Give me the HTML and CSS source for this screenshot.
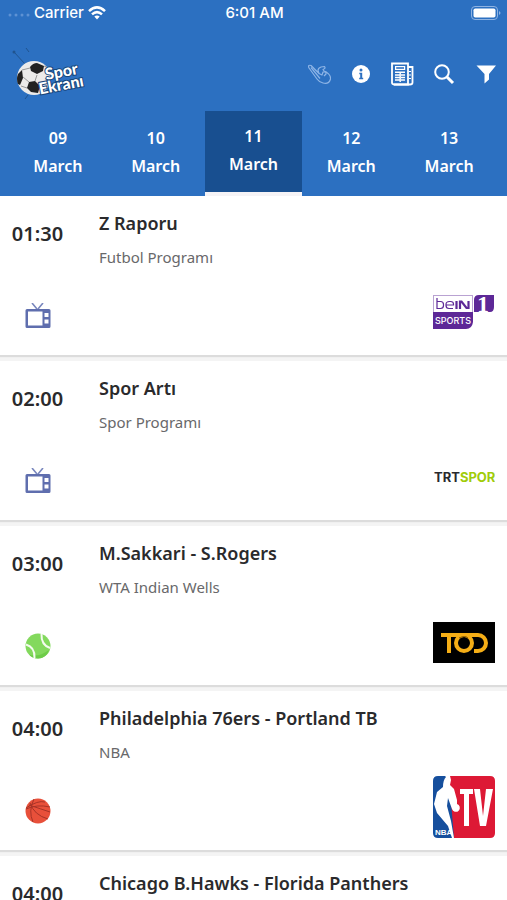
FILE: index.html
```
<!DOCTYPE html>
<html lang="en">
<head>
<meta charset="utf-8">
<meta name="viewport" content="width=device-width, initial-scale=1">
<title>Spor Ekranı</title>
<link rel="stylesheet" href="styles.css">
</head>
<body>
<svg class="defs" aria-hidden="true">
  <symbol id="tv" viewBox="0 0 26 26">
    <path d="M7 0l5 6M18 0l-5 6" fill="none" stroke="#7886bd" stroke-width="1.6"/>
    <path fill-rule="evenodd" d="M2 6h22q1.500 0 1.500 1.500v16q0 1.500-1.500 1.500h-22q-1.500 0-1.500-1.500v-16q0-1.500 1.500-1.500zM3 8.500v14h14.500v-14zM19.500 10v4h4v-4zM19.500 16.500v4h4v-4z" fill="#5f6eae"/>
  </symbol>
</svg>
<div class="screen">
  <header class="header">
    <div class="status">
      <div class="carrier">
        <svg class="dots" viewBox="0 0 22 6" aria-hidden="true"><g fill="#5e92d4"><circle cx="2" cy="5" r="1.500"/><circle cx="8" cy="5" r="1.500"/><circle cx="14" cy="5" r="1.500"/><circle cx="20" cy="5" r="1.500"/></g></svg>
        <span>Carrier</span>
        <svg class="wifi" viewBox="0 0 18 14" aria-hidden="true"><g fill="none" stroke="#fff" stroke-width="2.500"><path d="M1 5.200Q9-2.400 17 5.200"/><path d="M4 8.400Q9 3.800 14 8.400"/></g><path d="M6.300 10.600Q9 8.500 11.700 10.600L9 13.600z" fill="#fff"/></svg>
      </div>
      <time>6:01 AM</time>
      <svg class="battery" viewBox="0 0 30 14" aria-hidden="true"><rect x=".5" y=".5" width="26" height="13" rx="3.500" fill="none" stroke="#8fb3e2"/><rect x="2.500" y="2.500" width="22" height="9" rx="1.800" fill="#fff"/><path d="M28 5q3 2 0 4z" fill="#8fb3e2"/></svg>
    </div>
    <div class="bar">
      <a href="#" class="brand" aria-label="Spor Ekranı">
        <svg viewBox="0 0 76 54" aria-hidden="true">
          <path d="M2 5l11 12M14 1l3 4M16 48l-3 4" stroke="#20548f" stroke-width="1"/><circle cx="2" cy="5" r="1.500" fill="#20548f"/>
          <circle cx="22" cy="31" r="17" fill="#ecebea"/>
          <g fill="#222"><path d="M18 20q3-4 7-4l7 3-1 5-6 3-6-3z"/><path d="M6 27l4-4 1 8-3 7-2-1q-2-5 0-10z"/><path d="M17 35l6-1 5 5-2 7-7-1-4-4z"/></g>
          <path d="M11 30l6 5M25 28l-2 6M10 23l8-2M15 41l-6-2M32 19l5 2" stroke="#999" fill="none"/>
          <g class="brand-text" transform="rotate(-11 50 30)"><text x="34" y="30">Spor</text><text x="25" y="43">Ekranı</text></g>
        </svg>
      </a>
      <nav class="actions" aria-label="Tools">
        <button type="button" aria-label="Gestures"><svg viewBox="0 0 26 26"><g fill="none" stroke="#8db4e6" stroke-width="1.200" stroke-linejoin="round"><path d="M12 18L4 7Q2.500 3.500 6 4.500L14 12.500L13 9.500Q13 7 16 6L19.500 5.500Q21 7.500 18 8.500L19 10Q26 13 25.500 18Q24 23.500 18 22Q14 21 12 18z"/><path d="M14 12.500l3 1.500 1-3h3v2l-2 2M6 6.500l9 11"/></g></svg></button>
        <button type="button" aria-label="Information"><svg viewBox="0 0 26 26"><circle cx="14" cy="13" r="9" fill="#fff"/><circle cx="14" cy="9" r="1.500" fill="#2c70c1"/><path d="M12.300 11.800h2.900v5h1v1.400h-4v-1.400h1v-3.600h-.9z" fill="#2c70c1"/></svg></button>
        <button type="button" aria-label="News"><svg viewBox="0 0 26 26"><g fill="none" stroke="#fff"><path d="M3 2.500h16v21H5q-2-.2-2-2z" stroke-width="1.800"/><path d="M19 6h4.500v15.500q0 2-2.500 2H5" stroke-width="1.800"/><rect x="6.600" y="5.600" width="9" height="2.800" stroke-width="1.200"/><path d="M6 11.200h10M6 14h4.500M12 14h4M6 16.500h4.500M12 16.500h4M6 19h4.500M12 19h4M11.200 11v10" stroke-width="1.400"/><path d="M20 10.500h2M20 14h2M20 17.500h2" stroke-width="1.200"/></g></svg></button>
        <button type="button" aria-label="Search"><svg viewBox="0 0 26 26"><g fill="none" stroke="#fff"><circle cx="11" cy="11" r="6.800" stroke-width="2"/><path d="M16 16l6 6" stroke-width="3"/></g></svg></button>
        <button type="button" aria-label="Filter"><svg viewBox="0 0 26 26"><path d="M3.500 4.500h19.500l-7 8.500v5.500l-4.500 4V13z" fill="#fff"/></svg></button>
      </nav>
    </div>
    <nav class="days" aria-label="Days">
      <a href="#"><span>09</span><span>March</span></a>
      <a href="#"><span>10</span><span>March</span></a>
      <a href="#" class="active" aria-current="date"><span>11</span><span>March</span></a>
      <a href="#"><span>12</span><span>March</span></a>
      <a href="#"><span>13</span><span>March</span></a>
    </nav>
  </header>
  <main class="list">
    <article class="card">
      <time>01:30</time>
      <div class="info"><h2>Z Raporu</h2><p>Futbol Programı</p></div>
      <svg class="kind" role="img" aria-label="TV programme"><use href="#tv"/></svg>
      <svg class="channel" viewBox="0 0 62 62" role="img" aria-label="beIN Sports 1">
        <rect x=".5" y="14.500" width="39" height="17" fill="#fff" stroke="#b9a2d2"/>
        <path d="M0 31h40v10q-1 7-7 7H0z" fill="#5d2897"/><path d="M41 31V19q0-5 5-5h15v12q0 5-4 5z" fill="#5d2897"/>
        <g fill="none" stroke="#5d2897" stroke-width="1.200"><path d="M4 17v10.500h3.500q3 0 3-3v-1q0-3-3-3H4"/><path d="M13 24h7.500v-1q0-2.500-3-2.500h-1q-3.500 0-3.500 3v1q0 3 3 3h4"/></g>
        <path d="M23.500 20v8M27 28v-7.500h1.500l5 6.500H35.500V20" fill="none" stroke="#5d2897" stroke-width="2.200"/>
        <text class="sports" x="2" y="43">SPORTS</text><text class="one" x="44" y="31">1</text>
      </svg>
    </article>
    <article class="card">
      <time>02:00</time>
      <div class="info"><h2>Spor Artı</h2><p>Spor Programı</p></div>
      <svg class="kind" role="img" aria-label="TV programme"><use href="#tv"/></svg>
      <svg class="channel" viewBox="0 0 62 62" role="img" aria-label="TRT Spor">
        <text class="trt" x="1" y="36">TRT<tspan fill="#a0cc0a">SPOR</tspan></text>
      </svg>
    </article>
    <article class="card">
      <time>03:00</time>
      <div class="info"><h2>M.Sakkari - S.Rogers</h2><p>WTA Indian Wells</p></div>
      <svg class="kind" viewBox="0 0 26 26" role="img" aria-label="Tennis"><circle cx="13" cy="13" r="12.500" fill="#83d95d"/><path d="M4 21.500Q13 25 24 17Q21 25.500 13 25.500Q7 25.500 4 21.500z" fill="#6dcc48"/><g fill="none" stroke="#f4fbef" stroke-width="2"><path d="M1 11.500Q10 14 9.500 25"/><path d="M16.500 1Q16 12 25 15"/></g></svg>
      <svg class="channel" viewBox="0 0 62 62" role="img" aria-label="TOD">
        <rect x="0" y="11" width="62" height="41" fill="#000"/>
        <g fill="none" stroke="#f5ae16" stroke-width="4"><path d="M8 24h37a8 8 0 0 1 0 16h-4"/><path d="M16 24v18"/><circle cx="31" cy="32" r="8"/></g><path d="M26 27q6-3 9 0" fill="none" stroke="#8b5c00" stroke-width="1"/>
      </svg>
    </article>
    <article class="card">
      <time>04:00</time>
      <div class="info"><h2>Philadelphia 76ers - Portland TB</h2><p>NBA</p></div>
      <svg class="kind" viewBox="0 0 26 26" role="img" aria-label="Basketball"><circle cx="13" cy="13" r="12.500" fill="#e8503a"/><g fill="none" stroke="#a73327" stroke-width="1"><path d="M9 1Q3 13 8 24M1 10Q13 2 20 4M5 5Q9 17 23 21M1 11Q12 6 25 9M4 7Q16 11 25 14"/></g></svg>
      <svg class="channel" viewBox="0 0 62 62" role="img" aria-label="NBA TV">
        <path d="M5 0h18v62H5q-5 0-5-5V5q0-5 5-5z" fill="#164f9d"/><path d="M16 0h41q5 0 5 5v52q0 5-5 5H21z" fill="#dd1935"/>
        <path d="M12 0h5l1 4-1 5 4 4 3 11v4a4 4 0 1 1-5 5l-4-11-1 8 4 15 3 17h-2L15 50 4 37 1 28l3-12 6-5q0-7 3-10z" fill="#fff"/>
        <text class="nba" x="2" y="59">NBA</text>
        <path d="M27 13h13v5h-4v32h-5V18h-4zM41 13h6l3 27 3-27h7l-7 37h-6z" fill="#fff"/>
      </svg>
    </article>
    <article class="card">
      <time>04:00</time>
      <div class="info"><h2>Chicago B.Hawks - Florida Panthers</h2></div>
    </article>
  </main>
</div>
</body>
</html>
```
FILE: styles.css
```
* { box-sizing: border-box; }
body { margin: 0; background: #f4f4f4; color: #2a2a2c; font-family: "Noto Sans", "Open Sans", sans-serif; }
h2, p { margin: 0; }
.defs { position: absolute; width: 0; height: 0; }
.screen { display: flex; flex-direction: column; height: 100vh; overflow: hidden; }
.header { flex: none; background: #2c70c1; color: #fff; }
.status { display: grid; grid-template-columns: 1fr auto 1fr; align-items: center; height: 26px; padding: 0 6px 0 8px; font: 500 15px/26px Inter, sans-serif; }
.carrier { display: flex; align-items: center; gap: 4px; }
.dots { width: 22px; height: 6px; overflow: visible; }
.wifi { width: 18px; height: 14px; }
.battery { width: 30px; height: 14px; justify-self: end; }
.bar { display: flex; align-items: center; justify-content: space-between; height: 85px; padding: 11px 8px 0 12px; }
.brand svg { display: block; width: 76px; height: 54px; }
.brand-text { font: 900 16px Lato, sans-serif; fill: #fff; stroke: #174579; stroke-width: 2px; paint-order: stroke; }
.actions { display: flex; gap: 16px; }
.actions button { display: block; width: 26px; height: 26px; padding: 0; border: 0; background: none; }
.actions svg { display: block; width: 26px; height: 26px; }
.days { display: grid; grid-template-columns: repeat(5, 1fr); height: 85px; padding: 0 9px; }
.days a { display: flex; flex-direction: column; justify-content: center; padding-bottom: 4px; color: #fff; text-align: center; text-decoration: none; font-size: 16px; font-weight: 600; line-height: 28px; }
.days .active { background: #184f90; border-bottom: 4px solid #f5f3f6; }
.list { flex: 1; overflow: hidden; }
.card { display: grid; grid-template-columns: 75px 1fr 62px; grid-template-rows: 72px 62px; height: 159px; margin-bottom: 6px; padding: 13px 12px 12px 0; background: #fff; box-shadow: 0 2px 1px #dcdcdc; }
.card time { padding-top: 10px; text-align: center; font-size: 20px; line-height: 30px; font-weight: 600; }
.info { grid-column: 2 / 4; padding-left: 24px; }
.info h2 { font-size: 18px; line-height: 28px; font-weight: 600; white-space: nowrap; }
.info p { padding-top: 8px; font-size: 15px; line-height: 24px; color: #68686a; }
.kind { width: 26px; height: 26px; margin-bottom: 14px; justify-self: center; align-self: end; }
.channel { grid-column: 3; width: 62px; height: 62px; }
.sports { font: 500 9px Inter, sans-serif; fill: #fff; }
.one { font: 700 24px "Liberation Serif", serif; fill: #fff; }
.trt { font: 700 13px Inter, sans-serif; fill: #29292d; }
.nba { font: 700 8px "Liberation Sans", sans-serif; fill: #fff; }
```
